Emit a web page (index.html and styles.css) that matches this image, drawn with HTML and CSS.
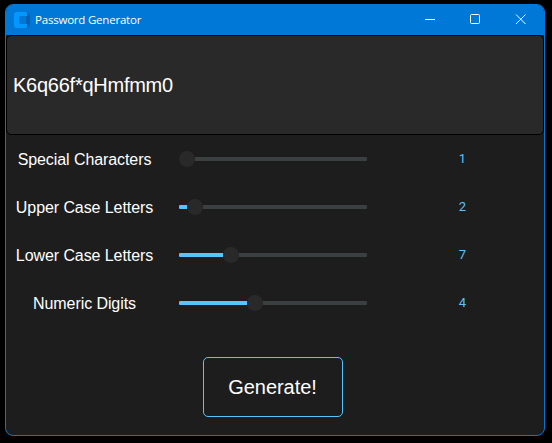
FILE: index.html
```
<!DOCTYPE html>
<html lang="en">
<head>
<meta charset="utf-8">
<title>Password Generator</title>
<link rel="stylesheet" href="styles.css">
</head>
<body>
<main class="window">
  <header class="titlebar">
    <svg class="logo" width="16" height="16" viewBox="0 0 16 16">
      <path d="M12 0h1a3 3 0 0 1 3 3v10a3 3 0 0 1-3 3h-1z" fill="#0562b3"/>
      <path d="M3 0h9a1 1 0 0 1 1 1v3H6.500q-1.500 0-1.500 1.500v5q0 1.500 1.500 1.500H13v3a1 1 0 0 1-1 1H3a3 3 0 0 1-3-3V3a3 3 0 0 1 3-3z" fill="#0696ff"/>
    </svg>
    <span class="title">Password Generator</span>
    <svg class="control" width="46" height="30" viewBox="0 0 46 30"><path d="M18 14.500h10"/></svg>
    <svg class="control" width="46" height="30" viewBox="0 0 46 30"><rect x="17.500" y="9.500" width="9" height="9" rx="1"/></svg>
    <svg class="control" width="46" height="30" viewBox="0 0 46 30"><path d="M17 9.500l9.500 9.500M26.500 9.500l-9.500 9.500"/></svg>
  </header>
  <div class="output">K6q66f*qHmfmm0</div>
  <section class="options">
    <div class="row">
      <span class="label">Special Characters</span>
      <div class="slider"><div class="fill" style="width:0px"></div><div class="thumb"></div><div class="rest"></div></div>
      <span class="value">1</span>
    </div>
    <div class="row">
      <span class="label">Upper Case Letters</span>
      <div class="slider"><div class="fill" style="width:8px"></div><div class="thumb"></div><div class="rest"></div></div>
      <span class="value">2</span>
    </div>
    <div class="row">
      <span class="label">Lower Case Letters</span>
      <div class="slider"><div class="fill" style="width:44px"></div><div class="thumb"></div><div class="rest"></div></div>
      <span class="value">7</span>
    </div>
    <div class="row">
      <span class="label">Numeric Digits</span>
      <div class="slider"><div class="fill" style="width:68px"></div><div class="thumb"></div><div class="rest"></div></div>
      <span class="value">4</span>
    </div>
  </section>
  <button class="generate">Generate!</button>
</main>
</body>
</html>
```

FILE: styles.css
```
* { box-sizing: border-box; }
body {
  margin: 0;
  height: 443px;
  padding: 4px 0 0 5px;
  background: #000;
  font-family: "Liberation Sans", Arial, sans-serif;
  overflow: hidden;
}
.window {
  width: 540px;
  height: 432px;
  display: flex;
  flex-direction: column;
  border: 1px solid #0078d7;
  border-radius: 8px;
  background: #1d1d1d;
  overflow: hidden;
}
.titlebar {
  flex: none;
  height: 30px;
  display: flex;
  align-items: center;
  padding-left: 8px;
  background: #0078d7;
  color: #fff;
}
.title {
  flex: 1;
  margin-left: 5px;
  font: 11.5px/16px "Segoe UI", "Open Sans", sans-serif;
  letter-spacing: -0.21px;
}
.control { fill: none; stroke: #fff; stroke-width: 1; position: relative; left: 1px; }
.output {
  flex: none;
  height: 100px;
  padding: 0 6px;
  border: 1px solid #000;
  border-radius: 5px;
  background: #292929;
  color: #fff;
  font-size: 20px;
  letter-spacing: -0.25px;
  line-height: 98px;
}
.row {
  height: 48px;
  display: grid;
  grid-template-columns: 157px 188px 157px;
  column-gap: 16px 17px;
  column-gap: 16px;
  align-items: center;
}
.label {
  padding-top: 1px;
  text-align: center;
  color: #fff;
  font-size: 16px;
  letter-spacing: -0.08px;
}
.slider { display: flex; align-items: center; }
.value { padding-left: 2px; }
.fill {
  height: 4px;
  border-radius: 1px 0 0 1px;
  background: #55c4ff;
}
.thumb {
  width: 16px;
  height: 16px;
  border-radius: 50%;
  background: #292929;
}
.rest {
  flex: 1;
  height: 4px;
  border-radius: 0 1px 1px 0;
  background: #3a3f40;
}
.value {
  text-align: center;
  color: #55c4ff;
  font: 13px/16px Roboto, sans-serif;
}
.generate {
  width: 140px;
  height: 60px;
  margin: 30px 0 0 197px;
  padding: 0 1px 0 0;
  border: 1px solid #55c4ff;
  border-radius: 5px;
  background: transparent;
  color: #fff;
  font: 20px "Liberation Sans", Arial, sans-serif;
  letter-spacing: -0.05px;
}
```
